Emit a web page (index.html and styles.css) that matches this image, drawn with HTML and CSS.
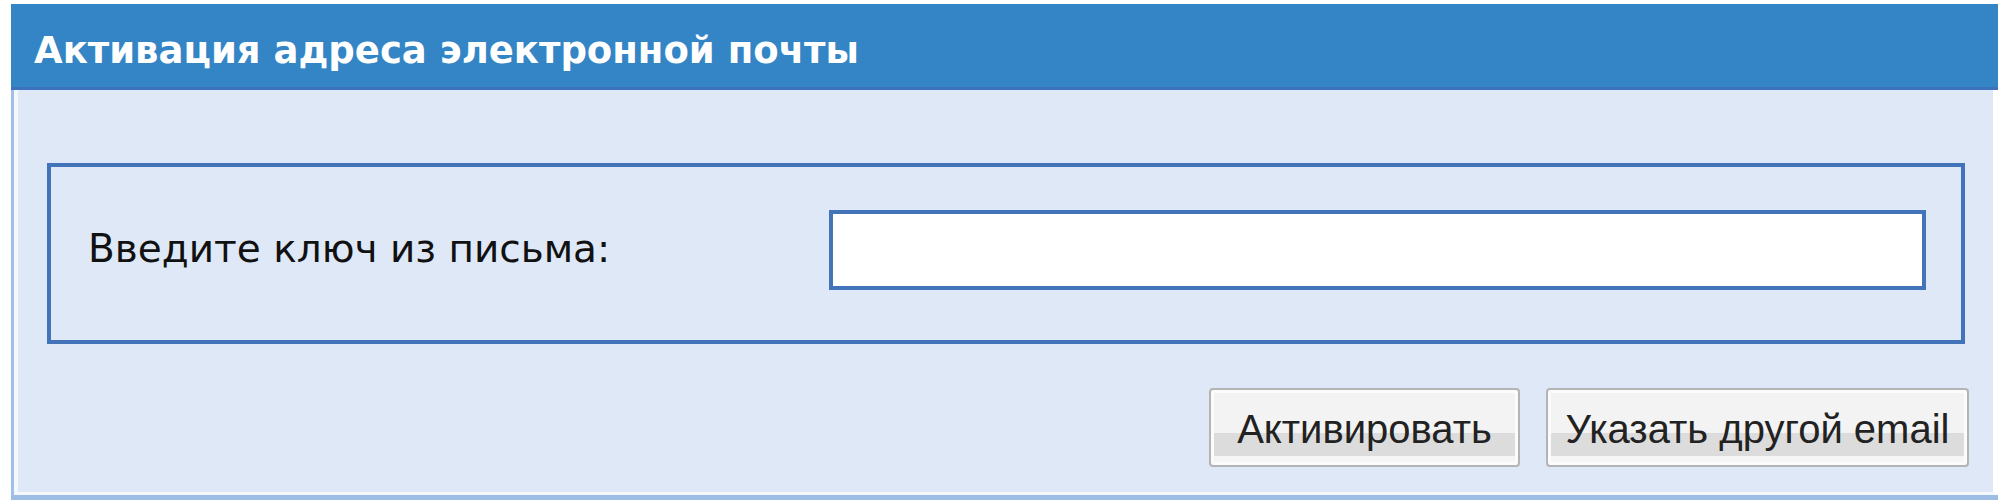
FILE: index.html
```html
<!DOCTYPE html>
<html lang="ru">
<head>
<meta charset="utf-8">
<title>Активация адреса электронной почты</title>
<link rel="stylesheet" href="styles.css">
</head>
<body>
<div class="panel">
  <div class="panel-header">
    <span class="panel-title">Активация адреса электронной почты</span>
  </div>
  <div class="panel-body">
    <div class="panel-inner">
      <div class="fieldset">
        <label class="field-label" for="key">Введите ключ из письма:</label>
        <input class="field-input" id="key" type="text">
      </div>
      <div class="buttons">
        <button class="btn btn-activate" type="button">Активировать</button>
        <button class="btn btn-change" type="button">Указать другой email</button>
      </div>
    </div>
  </div>
</div>
</body>
</html>
```
FILE: styles.css
```css
html, body {
  margin: 0;
  padding: 0;
  background: #ffffff;
}

body {
  font-family: "DejaVu Sans", sans-serif;
  overflow: hidden;
  height: 500px;
}

.panel {
  margin: 4px 0 0 11px;
}

.panel-header {
  height: 83px;
  background: #3385c6;
  border-bottom: 3px solid #3b72bb;
  display: flex;
  align-items: center;
  padding-left: 23px;
}

.panel-title {
  color: #ffffff;
  font-weight: bold;
  font-size: 37px;
  line-height: 1;
  padding-top: 9px;
}

.panel-body {
  border-left: 3px solid #a2bfe5;
  border-bottom: 5px solid #9dbce6;
}

.panel-inner {
  background: #dfe8f6;
  border-left: 4px solid #f4f8fd;
  border-bottom: 3px solid #f4f8fd;
  border-right: 5px solid #ffffff;
  padding: 73px 24px 25px 29px;
}

.fieldset {
  border: 4px solid #4374b9;
  height: 166px;
  display: flex;
  align-items: center;
  padding: 0 35px 7px 37px;
  margin-right: 4px;
}

.field-label {
  width: 741px;
  flex: none;
  font-size: 39px;
  color: #111111;
  padding-bottom: 3px;
}

.field-input {
  flex: 1;
  height: 80px;
  box-sizing: border-box;
  border: 4px solid #4374b9;
  background: #ffffff;
  margin: 0;
  padding: 0 8px;
  outline: none;
}

.buttons {
  display: flex;
  justify-content: flex-end;
  gap: 26px;
  margin-top: 44px;
}

.btn {
  height: 79px;
  padding: 3px 0 0;
  border: 2px solid #b4b4b4;
  border-radius: 4px;
  box-shadow: inset 0 0 0 3px #fbfbfb;
  background: linear-gradient(#f3f3f3 0, #f3f3f3 58%, #dcdcdc 58%, #dcdcdc 88%, #f5f5f5 88%);
  font-family: "Liberation Sans", Arial, sans-serif;
  font-size: 40px;
  color: #222222;
  line-height: 1;
  text-align: center;
}

.btn-activate {
  width: 311px;
}

.btn-change {
  width: 423px;
}
```
